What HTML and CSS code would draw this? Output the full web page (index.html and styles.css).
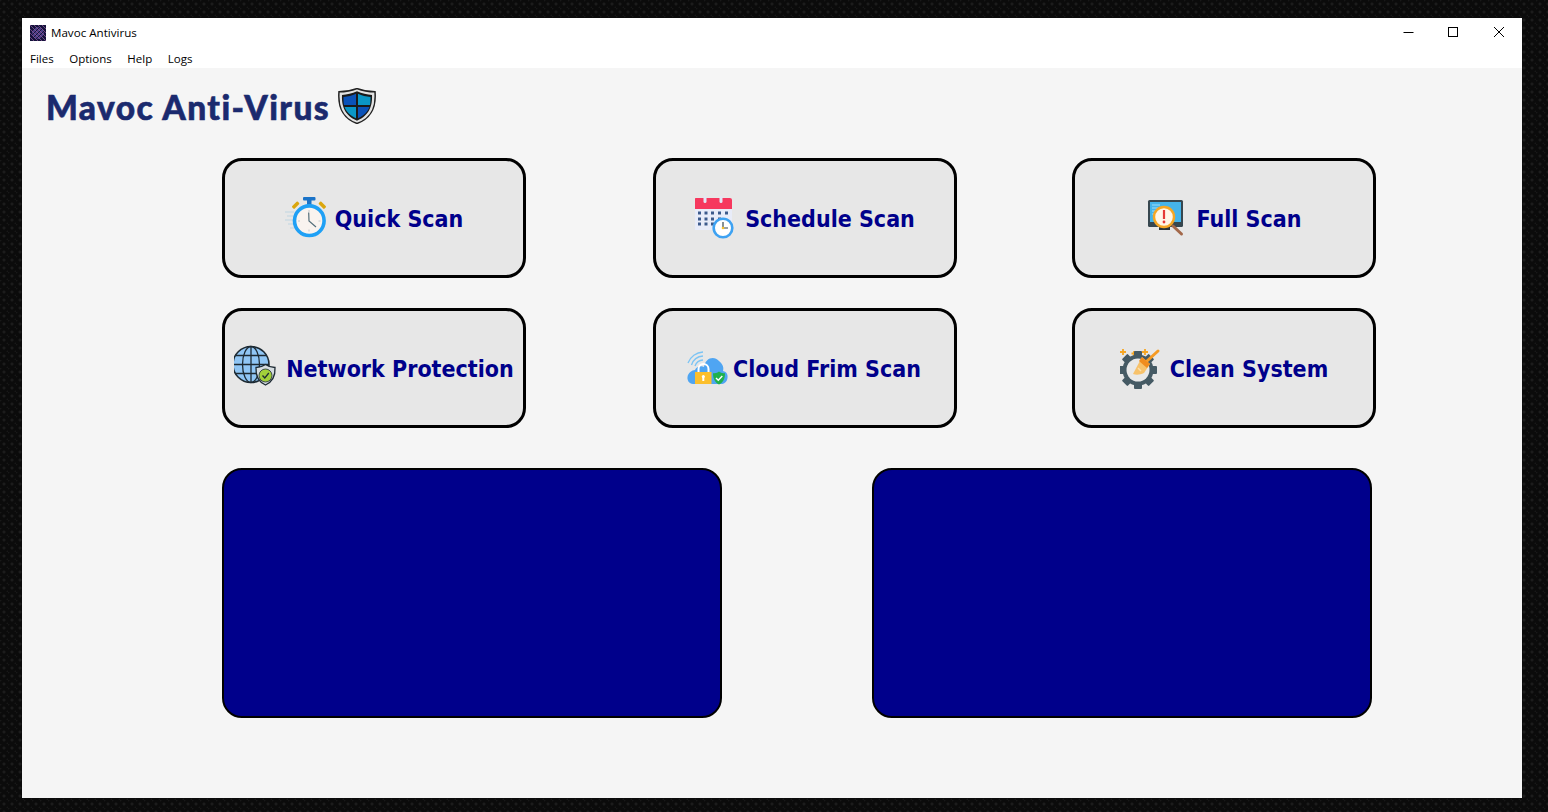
FILE: index.html
```html
<!doctype html>
<html lang="en">
<head>
  <meta charset="utf-8">
  <title>Mavoc Antivirus</title>
  <link rel="stylesheet" href="styles.css">
</head>
<body>
  <div class="window">
    <div class="titlebar">
      <svg class="app-icon" width="16" height="16" viewBox="0 0 16 16">
        <rect width="16" height="16" fill="#14143c"/>
        <circle cx="8" cy="8" r="6" fill="#4a3f86"/>
        <path d="M0 4L4 0M0 8L8 0M0 12L12 0M0 16L16 0M4 16L16 4M8 16L16 8M12 16L16 12" stroke="#14143c" stroke-width="1"/>
        <path d="M12 0L16 4M8 0L16 8M4 0L16 12M0 0L16 16M0 4L12 16M0 8L8 16M0 12L4 16" stroke="#9a5aa0" stroke-width=".7"/>
      </svg>
      <span class="app-name">Mavoc Antivirus</span>
      <div class="win-controls">
        <svg class="win-btn" width="45" height="30" viewBox="0 0 45 30"><path d="M17.500 14.500h10" stroke="#000"/></svg>
        <svg class="win-btn" width="45" height="30" viewBox="0 0 45 30"><rect x="17.500" y="9.500" width="9" height="9" fill="none" stroke="#000"/></svg>
        <svg class="win-btn" width="46" height="30" viewBox="0 0 46 30"><path d="M18 9l10 10M28 9l-10 10" stroke="#000"/></svg>
      </div>
    </div>
    <nav class="menubar">
      <span>Files</span>
      <span>Options</span>
      <span>Help</span>
      <span>Logs</span>
    </nav>

    <main class="content">
      <header class="brand">
        <h1>Mavoc Anti-Virus</h1>
        <svg class="brand-shield" width="38" height="36" viewBox="1 1 38 38" preserveAspectRatio="none">
          <path d="M20 1.500C14 4 8 5 2 5C1 18 3 32 20 38.500C37 32 39 18 38 5C32 5 26 4 20 1.500Z" fill="#e2e2e2" stroke="#222" stroke-width="1.500"/>
          <path d="M20 4.500C15 7 10 8 5 8.500C4.500 19 7 30 20 35.500C33 30 35.500 19 35 8.500C30 8 25 7 20 4.500Z" fill="#1a1a1a"/>
          <path d="M19 7C15 9 11 10 6.500 10.500C6.500 13 6.500 16 7 19H19Z" fill="#0b52b8"/>
          <path d="M21 7C25 9 29 10 33.500 10.500C33.500 13 33.500 16 33 19H21Z" fill="#0a97c6"/>
          <path d="M7.500 21H19V33C13 30 9.500 26 7.500 21Z" fill="#0a97c6"/>
          <path d="M32.500 21H21V33C27 30 30.500 26 32.500 21Z" fill="#0b52b8"/>
        </svg>
      </header>

      <div class="actions">
        <button class="action">
          <svg width="48" height="48" viewBox="0 0 48 48">
            <path d="M0 18h9M2 22h7M0 26h8M3 30h6M5 34h5" stroke="#cddbe4" stroke-width="1.500"/>
            <rect x="6.500" y="9.500" width="8" height="3.500" rx="1" fill="#dba70e" transform="rotate(-45 10.500 11)"/>
            <rect x="33.500" y="9.500" width="8" height="3.500" rx="1" fill="#dba70e" transform="rotate(45 37.500 11)"/>
            <rect x="22" y="5" width="4.500" height="7" fill="#1a73c8"/>
            <rect x="18" y="3" width="12.500" height="3.500" rx="1" fill="#1a73c8"/>
            <circle cx="24.300" cy="26.700" r="14.800" fill="#f9f3ef" stroke="#1fa0f5" stroke-width="3.600"/>
            <path d="M24 16v2M24 35.500v2M13 27h2M33.500 27h2" stroke="#c4c9cc" stroke-width="1"/>
            <path d="M23.700 18.500L24 27L31 33" fill="none" stroke="#546e7a" stroke-width="1.200"/>
          </svg>
          <span>Quick Scan</span>
        </button>
        <button class="action">
          <svg width="48" height="48" viewBox="0 0 48 48">
            <rect x="-1" y="4" width="38" height="32" rx="2" fill="#e8ecf9"/>
            <path d="M-1 15V6a2 2 0 0 1 2-2h34a2 2 0 0 1 2 2v9Z" fill="#f6385e"/>
            <rect x="8.500" y="2" width="3" height="7" rx="1.500" fill="#e3e7f6"/>
            <rect x="24.500" y="2" width="3" height="7" rx="1.500" fill="#e3e7f6"/>
            <path d="M3 19h3M9.500 19h3M16 19h3M23 19h3M30 19h3M3 25h3M9.500 25h3M16 25h3M23 25h3M3 30h3M9.500 30h3M16 30h3" stroke="#3c5a8c" stroke-width="2.800"/>
            <circle cx="28" cy="34" r="9.300" fill="#fff" stroke="#3ea2f2" stroke-width="2.600"/>
            <path d="M28 28v6h5" fill="none" stroke="#37474f" stroke-width="1.200"/>
            <circle cx="28" cy="34" r="1.300" fill="#f9c22b"/>
          </svg>
          <span>Schedule Scan</span>
        </button>
        <button class="action">
          <svg width="48" height="48" viewBox="0 0 48 48">
            <rect x="12" y="33" width="11" height="3" fill="#263238"/>
            <rect x="16" y="31" width="3" height="3" fill="#37474f"/>
            <rect x="1" y="6" width="35" height="27" rx="1.500" fill="#37474f"/>
            <rect x="3" y="8" width="31" height="20" fill="#45b4ea"/>
            <path d="M5 11h8M5 14h6M5 17h7M5 20h5" stroke="#9fdcf5" stroke-width="1.200"/>
            <path d="M26 32L34.500 40" stroke="#a3684a" stroke-width="3" stroke-linecap="round"/>
            <circle cx="17" cy="23" r="10" fill="#fff5e6" stroke="#f5a623" stroke-width="2.400"/>
            <path d="M17 16v9" stroke="#e53935" stroke-width="2.200"/>
            <circle cx="17" cy="28" r="1.400" fill="#e53935"/>
          </svg>
          <span>Full Scan</span>
        </button>
        <button class="action">
          <svg width="50" height="48" viewBox="2 0 50 48">
            <circle cx="19" cy="20.500" r="18" fill="#90c6f5" stroke="#1d2a33" stroke-width="1.600"/>
            <path d="M19 2.500V38.500M1 20.500H37M3.500 11.500H34.500M3.500 29.500H34.500" stroke="#1d2a33" stroke-width="1.300"/>
            <ellipse cx="19" cy="20.500" rx="8.500" ry="18" fill="none" stroke="#1d2a33" stroke-width="1.300"/>
            <path d="M33.500 20.500C30 23 27 23.500 24 23.500C23.500 32 27 38 33.500 41C40 38 43.500 32 43 23.500C40 23.500 37 23 33.500 20.500Z" fill="#d5dce0" stroke="#1d2a33" stroke-width="1.300"/>
            <circle cx="33.500" cy="31.500" r="6.500" fill="#a2cf3a" stroke="#1d2a33" stroke-width=".8"/>
            <path d="M30.500 31.500L32.800 34L36.800 29" fill="none" stroke="#1d2a33" stroke-width="1.300"/>
          </svg>
          <span>Network Protection</span>
        </button>
        <button class="action">
          <svg class="icon-overflow" width="42" height="48" viewBox="5 0 42 48">
            <path d="M4 19A17 17 0 0 1 19 8M7.500 21A13 13 0 0 1 19 12M11 22A9 9 0 0 1 19 16" fill="none" stroke="#7cc4f4" stroke-width="1.300"/>
            <path d="M9 40C5 40 3 36 3.500 33C4 29 8 26 11 26C12 23 17 21 20 23C21 14 30 11 35 17C39 20 40 24 39 27C43 28 44 31 43.500 34C43 38 40 40 37 40Z" fill="#4fa5f2"/>
            <path d="M14.500 28V25A5 5 0 0 1 24.500 25V28" fill="none" stroke="#fff" stroke-width="2"/>
            <rect x="11" y="28" width="16.500" height="12" fill="#fbbf2d"/>
            <rect x="18.300" y="32" width="2" height="5" fill="#fff"/>
            <circle cx="19.300" cy="32.500" r="1.500" fill="#fff"/>
            <path d="M35 27.500C33 29 31 29.300 29 29.300C29 35 31 38.500 35 40.500C39 38.500 41 35 41 29.300C39 29.300 37 29 35 27.500Z" fill="#1fb14c"/>
            <path d="M32 34L34.300 36.300L38.300 32" fill="none" stroke="#fff" stroke-width="1.400"/>
          </svg>
          <span>Cloud Frim Scan</span>
        </button>
        <button class="action">
          <svg width="48" height="48" viewBox="0 0 48 48">
            <path d="M3 5v6M0 8h6M14 7v5M11.500 9.500h5M25 5v6M22 8h6M11 15v6M8 18h6" stroke="#f6a623" stroke-width="1.800"/>
            <g fill="#455a64">
              <circle cx="18" cy="26" r="15.500"/>
              <rect x="14" y="7" width="8" height="38" rx="1"/>
              <rect x="-1" y="22" width="38" height="8" rx="1"/>
              <rect x="14" y="7" width="8" height="38" rx="1" transform="rotate(45 18 26)"/>
              <rect x="14" y="7" width="8" height="38" rx="1" transform="rotate(-45 18 26)"/>
            </g>
            <circle cx="18" cy="26" r="11.500" fill="#e9e9e9"/>
            <path d="M27 17L38 7" stroke="#f59a23" stroke-width="3" stroke-linecap="round"/>
            <path d="M22 13L30 20L24 29C20 31 16 31 13 30Z" fill="#f7c26b"/>
            <path d="M22 13L30 20L27 24L19 17Z" fill="#f08c1e"/>
            <path d="M18 24L21 27" stroke="#fbe0ae" stroke-width="1.500"/>
          </svg>
          <span>Clean System</span>
        </button>
      </div>

      <div class="panels">
        <div class="panel"></div>
        <div class="panel"></div>
      </div>
    </main>
  </div>
</body>
</html>
```

FILE: styles.css
```css
html, body {
  height: 100%;
}
body {
  margin: 0;
  padding: 18px 26px 14px 22px;
  box-sizing: border-box;
  background-color: #0b0b0b;
  background-image:
    radial-gradient(circle at 4px 4px, #1c1c1c 0, #1c1c1c 1px, transparent 2px),
    radial-gradient(circle at 0 0, #181818 0, #181818 1px, transparent 2px),
    radial-gradient(circle at 8px 8px, #181818 0, #181818 1px, transparent 2px);
  background-size: 8px 8px;
  overflow: hidden;
}
.window {
  width: 1500px;
  height: 780px;
  display: flex;
  flex-direction: column;
  background-color: #f5f5f5;
}
.titlebar {
  display: flex;
  align-items: center;
  height: 30px;
  padding-left: 8px;
  background-color: #fff;
  font-family: "Open Sans", "Noto Sans", sans-serif;
  font-size: 11.6px;
  color: #000;
}
.app-icon {
  margin-right: 5px;
}
.app-name {
  padding-bottom: 2px;
}
.win-controls {
  display: flex;
  margin-left: auto;
}
.win-btn {
  display: block;
}
.menubar {
  display: flex;
  align-items: center;
  gap: 15.6px;
  height: 20px;
  padding-left: 8px;
  background-color: #fff;
  font-family: "Open Sans", "Noto Sans", sans-serif;
  font-size: 11.5px;
  color: #000;
}
.content {
  flex: 1;
  padding: 0 0 0 200px;
}
.brand {
  display: flex;
  align-items: center;
  gap: 8px;
  height: 80px;
  margin: 0 0 10px -176px;
}
.brand h1 {
  margin: 0 0 2px;
  font-family: Lato, sans-serif;
  font-size: 33.5px;
  font-weight: 900;
  letter-spacing: 1.4px;
  color: #1b2a6e;
  -webkit-text-stroke: .6px #1b2a6e;
}
.brand-shield {
  margin-bottom: 5px;
}
.actions {
  display: grid;
  grid-template-columns: 431px 419px 304px;
  grid-auto-rows: 120px;
  row-gap: 30px;
}
.action {
  width: 304px;
  display: flex;
  align-items: center;
  justify-content: center;
  gap: 2px;
  padding: 0;
  background-color: #e7e7e7;
  border: 3px solid #000;
  border-radius: 20px;
  font-family: "DejaVu Sans", sans-serif;
  font-stretch: condensed;
  font-size: 23px;
  font-weight: bold;
  color: #00008b;
}
.action span {
  padding-top: 2px;
}
.icon-overflow {
  overflow: visible;
}
.panels {
  display: flex;
  gap: 150px;
  margin-top: 40px;
}
.panel {
  width: 500px;
  height: 250px;
  box-sizing: border-box;
  background-color: #00008b;
  border: 2px solid #000;
  border-radius: 20px;
}
```
